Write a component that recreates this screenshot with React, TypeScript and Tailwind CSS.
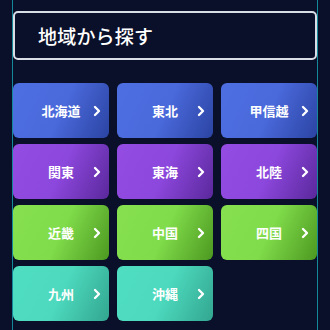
import { ChevronRight } from 'lucide-react'

const REGIONS = [
  { name: '北海道', tone: 'blue' },
  { name: '東北', tone: 'blue' },
  { name: '甲信越', tone: 'blue' },
  { name: '関東', tone: 'purple' },
  { name: '東海', tone: 'purple' },
  { name: '北陸', tone: 'purple' },
  { name: '近畿', tone: 'green' },
  { name: '中国', tone: 'green' },
  { name: '四国', tone: 'green' },
  { name: '九州', tone: 'teal' },
  { name: '沖縄', tone: 'teal' },
]

const TONES: Record<string, string> = {
  blue: 'bg-[linear-gradient(115deg,#4d6fe2_0%,#4a69db_50%,#2b44a3_100%)]',
  purple: 'bg-[linear-gradient(115deg,#944ce2_0%,#8c47dc_50%,#5a289c_100%)]',
  green: 'bg-[linear-gradient(115deg,#86e04f_0%,#80dc4a_50%,#4c9820_100%)]',
  teal: 'bg-[linear-gradient(115deg,#50dec2_0%,#4cd9bd_50%,#33a690_100%)]',
}

export default function App() {
  return (
    <div className="min-h-screen bg-[#0a1029] font-['Noto_Sans_CJK_JP',sans-serif] text-white">
      <div className="mx-[12px] min-h-screen border-x border-[#14899a] pt-[11px]">
        {/* Title */}
        <div className="flex h-[49px] items-center rounded-[5px] border-2 border-[#d9dde6] pl-[23px]">
          <h1 className="text-[19px] font-medium leading-none tracking-[0.2px]">地域から探す</h1>
        </div>

        {/* Region grid */}
        <div className="mt-[23px] grid grid-cols-3 gap-x-2 gap-y-[6px]">
          {REGIONS.map(r => (
            <button
              key={r.name}
              className={`relative flex h-[55px] items-center justify-center rounded-[6px] ${TONES[r.tone]}`}
            >
              <span className="text-[13px] font-bold leading-none">{r.name}</span>
              <ChevronRight
                size={16}
                strokeWidth={3.5}
                className="absolute right-[4px] top-1/2 -translate-y-1/2"
              />
            </button>
          ))}
        </div>
      </div>
    </div>
  )
}
